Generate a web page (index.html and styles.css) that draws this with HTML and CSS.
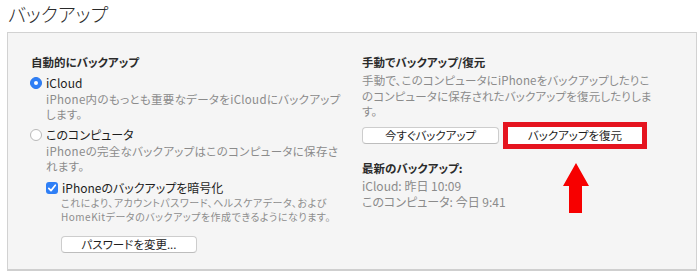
FILE: index.html
```html
<!DOCTYPE html>
<html lang="ja">
<head>
<meta charset="utf-8">
<link rel="stylesheet" href="styles.css">
</head>
<body>
<h1 class="title">バックアップ</h1>
<section class="panel">
  <div class="col col-left">
    <div class="head">自動的にバックアップ</div>
    <div class="row first-row"><span class="radio on"></span><span class="label">iCloud</span></div>
    <div class="desc indent"><span class="line">iPhone内のもっとも重要なデータをiCloudにバックアップ</span><span class="line">します。</span></div>
    <div class="row"><span class="radio"></span><span class="label">このコンピュータ</span></div>
    <div class="desc indent"><span class="line">iPhoneの完全なバックアップはこのコンピュータに保存さ</span><span class="line">れます。</span></div>
    <div class="row check-row"><span class="check"><svg viewBox="0 0 12 12" width="12" height="12"><path d="M2.8 6.3 L5 8.6 L9.3 3.2" fill="none" stroke="#fff" stroke-width="1.7" stroke-linecap="round" stroke-linejoin="round"/></svg></span><span class="label">iPhoneのバックアップを暗号化</span></div>
    <div class="small indent2"><span class="line">これにより、アカウントパスワード、ヘルスケアデータ、および</span><span class="line">HomeKitデータのバックアップを作成できるようになります。</span></div>
    <div class="btn-row indent2"><button class="btn btn-pw">パスワードを変更...</button></div>
  </div>
  <div class="col col-right">
    <div class="head">手動でバックアップ/復元</div>
    <div class="desc rdesc"><span class="line">手動で、このコンピュータにiPhoneをバックアップしたりこ</span><span class="line">のコンピュータに保存されたバックアップを復元したりしま</span><span class="line">す。</span></div>
    <div class="buttons">
      <button class="btn btn-now">今すぐバックアップ</button>
      <span class="highlight"><button class="btn btn-restore">バックアップを復元</button></span>
    </div>
    <div class="head latest">最新のバックアップ:</div>
    <div class="desc info"><span class="line">iCloud: 昨日 10:09</span><span class="line">このコンピュータ: 今日 9:41</span></div>
  </div>
</section>
<svg class="arrow" viewBox="0 0 32 56" width="32" height="56"><polygon points="16,3 3,26 9,26 9,53 22,53 22,26 29,26" fill="#f70000"/></svg>
</body>
</html>
```
FILE: styles.css
```css
html, body {
  margin: 0;
  padding: 0;
  background: #ffffff;
}
body {
  position: relative;
  width: 700px;
  height: 278px;
  overflow: hidden;
  font-family: "Noto Sans CJK JP", "Noto Sans", sans-serif;
  font-feature-settings: "palt" 1;
  color: #222222;
}
.title {
  margin: 0;
  padding: 0 0 0 8px;
  height: 32px;
  line-height: 28px;
  font-size: 19px;
  font-weight: 300;
  color: #2a2a2a;
}
.panel {
  box-sizing: border-box;
  margin-left: 7px;
  width: 690px;
  height: 239px;
  background: #f5f5f5;
  border: 1px solid #d2d2d2;
  border-bottom: 2px solid #cfcfcf;
  padding: 21px 0 0 23px;
  display: grid;
  grid-template-columns: 331px 1fr;
}
.col {
  display: flex;
  flex-direction: column;
  align-items: flex-start;
}
.head {
  font-size: 11.5px;
  line-height: 16px;
  font-weight: 700;
  color: #2b2b2b;
}
.row {
  display: flex;
  align-items: center;
  height: 18px;
  margin-top: 4px;
}
.check-row {
  margin-top: 5px;
  margin-left: 15px;
}
.label {
  font-size: 12px;
  line-height: 18px;
  color: #1e1e1e;
  margin-left: 4px;
}
.radio {
  box-sizing: border-box;
  width: 12px;
  height: 12px;
  border-radius: 50%;
  background: #ffffff;
  border: 1px solid #b9b9b9;
  margin-left: -1px;
  display: flex;
  align-items: center;
  justify-content: center;
}
.radio.on {
  background: #2f7ff6;
  border-color: #2a78ee;
}
.radio.on::after {
  content: "";
  width: 4px;
  height: 4px;
  border-radius: 50%;
  background: #ffffff;
}
.check {
  box-sizing: border-box;
  width: 12px;
  height: 12px;
  border-radius: 3px;
  background: #2f7ff6;
  display: flex;
}
.desc {
  font-size: 11.5px;
  letter-spacing: 0.3px;
  line-height: 15px;
  color: #8b8b8b;
}
.line {
  display: block;
  white-space: nowrap;
}
.indent {
  margin-left: 15px;
}
.indent2 {
  margin-left: 30px;
}
.small {
  font-size: 10px;
  letter-spacing: 0.5px;
  line-height: 13.5px;
  margin-top: -1px;
  color: #8d8d8d;
}
.btn {
  box-sizing: border-box;
  height: 17px;
  padding: 0;
  margin: 0;
  background: #ffffff;
  border: 1px solid #cdcdcd;
  border-bottom-color: #bdbdbd;
  border-radius: 4px;
  font-family: "Noto Sans CJK JP", "Noto Sans", sans-serif;
  font-feature-settings: "palt" 1;
  font-size: 11.5px;
  line-height: 15px;
  color: #1e1e1e;
  text-align: center;
}
.btn-row {
  margin-top: 7px;
}
.btn-pw {
  width: 136px;
}
.rdesc {
  margin-top: 3px;
  line-height: 15.5px;
  letter-spacing: 0.15px;
}
.buttons {
  display: flex;
  align-items: center;
  gap: 4px;
  margin-top: 2px;
}
.btn-now {
  width: 137px;
}
.highlight {
  display: flex;
  border: 5px solid #e5141f;
}
.btn-restore {
  width: 134px;
  border-color: #ffffff;
  border-radius: 0;
}
.latest {
  margin-top: 11px;
}
.info {
  margin-top: 2px;
  line-height: 16px;
  font-size: 12px;
  letter-spacing: 0;
}
.arrow {
  position: absolute;
  left: 560px;
  top: 160px;
}
```
